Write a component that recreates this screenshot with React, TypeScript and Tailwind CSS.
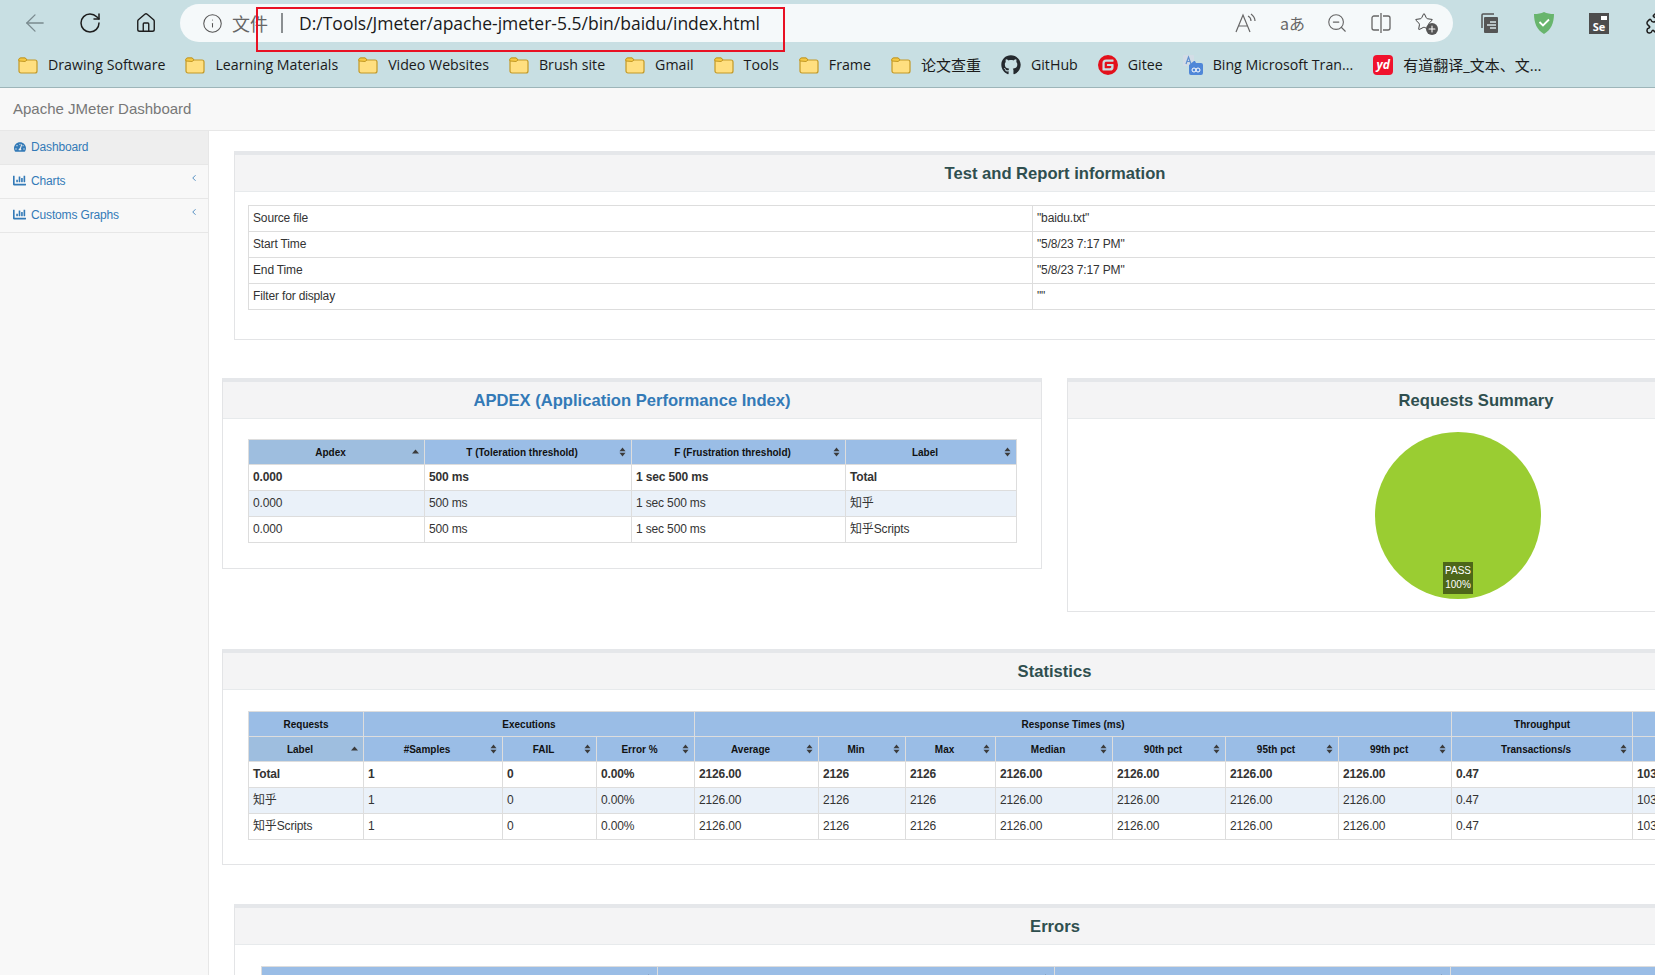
import type { ReactNode } from "react";
import { ArrowLeft, ChevronLeft, House, Info, Plus, Puzzle, RotateCw, Star, ZoomOut } from "lucide-react";
import { FaChartBar, FaGithub, FaTachometerAlt } from "react-icons/fa";
import { SiGitee } from "react-icons/si";

const Folder = () => (
  <svg width="20" height="18" viewBox="0 0 20 18" className="shrink-0">
    <path d="M1 4a2 2 0 0 1 2-2h4l2 2h8a2 2 0 0 1 2 2v9a2 2 0 0 1-2 2H3a2 2 0 0 1-2-2z" fill="#ffdf80" stroke="#c49a26" strokeWidth="1.2" />
    <path d="M1 5a2 2 0 0 1 2-3h4l2 2-2 1.500z" fill="#f5c842" stroke="#c49a26" strokeWidth="1" />
  </svg>
);

const BingIcon = () => (
  <svg width="20" height="20" viewBox="0 0 20 20" className="shrink-0">
    <rect x="0" y="0" width="11" height="11" rx="1" fill="#d3dde6" />
    <path d="M3 9l2.500-7L8 9M4 6.500h3" fill="none" stroke="#5f8fd0" strokeWidth="1.200" />
    <path d="M11 6h1l1 2h5a2 2 0 0 1 2 2v8a2 2 0 0 1-2 2H8a2 2 0 0 1-2-2v-8z" fill="#4f87d8" />
    <circle cx="11" cy="15" r="2" fill="none" stroke="#fff" strokeWidth="1" />
    <circle cx="15" cy="15" r="2" fill="none" stroke="#fff" strokeWidth="1" />
  </svg>
);

function Bookmark({ icon, label, className, labelClass }: { icon: ReactNode; label: string; className: string; labelClass?: string }) {
  return (
    <div className={`flex items-center gap-[10px] ${className}`}>
      {icon}
      <span className={`${labelClass ?? "text-[14.2px]"} text-[#1a1a1a] whitespace-nowrap`}>{label}</span>
    </div>
  );
}

function BrowserChrome() {
  return (
    <div className="relative h-[88px] shrink-0 bg-[#c8dfe3] border-b border-[#9db5b9] font-['Open_Sans','Noto_Sans_CJK_SC',sans-serif]">
      <div className="flex items-center h-[46px]">
        <ArrowLeft size={28} strokeWidth={1.1} className="ml-[21px] shrink-0 text-[#7a8a8f]" />
        <RotateCw size={24} strokeWidth={1.5} className="ml-[29px] shrink-0 text-[#1c1c1c]" />
        <House size={22} strokeWidth={1.5} className="ml-[33px] shrink-0 text-[#1c1c1c]" />
        <div className="ml-[23px] w-[1273px] shrink-0 h-[38px] rounded-full bg-[#f5f9fa] flex items-center pr-[17px]">
          <Info size={21} strokeWidth={1.2} className="ml-[22px] shrink-0 text-[#555]" />
          <span className="ml-[9px] text-[18px] text-[#666] font-['Noto_Sans_CJK_SC',sans-serif]">文件</span>
          <span className="ml-[13px] w-[2px] h-[20px] bg-[#8a8f91]" />
          <span className="ml-[16px] text-[17.500px] text-[#1a1a1a] whitespace-nowrap">D:/Tools/Jmeter/apache-jmeter-5.5/bin/baidu/index.html</span>
          <div className="ml-auto flex items-center gap-[22px] text-[#666]">
            <svg width="24" height="22" viewBox="0 0 24 22" fill="none" stroke="#666" strokeWidth="1.200">
              <path d="M2 20L9 3l7 17M5 14h8" />
              <path d="M14 4c2 1 3 3 3 5M17 2c2 1.500 4 4 4 7" />
            </svg>
            <span className="w-[24px] text-[16px] leading-none text-center whitespace-nowrap font-['Noto_Sans_CJK_SC',sans-serif]">aあ</span>
            <ZoomOut size={22} strokeWidth={1.2} />
            <svg width="22" height="22" viewBox="0 0 22 22" fill="none" stroke="#666" strokeWidth="1.300">
              <path d="M9 4H4a2 2 0 0 0-2 2v10a2 2 0 0 0 2 2h5M13 4h5a2 2 0 0 1 2 2v10a2 2 0 0 1-2 2h-5M11 1v20" />
            </svg>
            <div className="relative w-[22px] h-[22px]">
              <Star size={20} strokeWidth={1.200} className="text-[#444]" />
              <span className="absolute right-[-2px] bottom-[-1px] w-[12px] h-[12px] rounded-full bg-[#555] flex items-center justify-center">
                <Plus size={10} strokeWidth={2.500} className="text-white" />
              </span>
            </div>
          </div>
        </div>
        <svg width="20" height="22" viewBox="0 0 20 22" className="ml-[26px] shrink-0" fill="none">
          <path d="M3 16V3a1 1 0 0 1 1-1h11" stroke="#555" strokeWidth="1.500" />
          <rect x="5" y="5" width="14" height="16" rx="1" fill="#555" />
          <path d="M11 10h6M8 13h9M11 16h6" stroke="#d7e5e8" strokeWidth="1.300" />
        </svg>
        <svg width="20" height="22" viewBox="0 0 20 22" className="ml-[35px] shrink-0">
          <path d="M10 0c3 1.500 6 2 10 2 0 9-3 16-10 20C3 18 0 11 0 2c4 0 7-.5 10-2z" fill="#68b56d" />
          <path d="M5.500 10l3.500 3.500 6-6" fill="none" stroke="#fff" strokeWidth="1.800" />
        </svg>
        <div className="relative ml-[35px] w-[20px] h-[21px] shrink-0 bg-[#4d4d4d] text-white text-[11px] font-bold flex items-end justify-center leading-[14px]">
          Se
          <span className="absolute top-[3px] right-[2px] w-[6px] h-[4px] bg-white" />
        </div>
        <Puzzle size={24} strokeWidth={1.5} className="ml-[36px] shrink-0 text-[#1c1c1c]" />
      </div>
      <div className="flex items-center h-[36px] mt-[1px] pl-[18px]">
        <Bookmark icon={<Folder />} label="Drawing Software" className="mr-[20px]" />
        <Bookmark icon={<Folder />} label="Learning Materials" className="mr-[20px]" />
        <Bookmark icon={<Folder />} label="Video Websites" className="mr-[20px]" />
        <Bookmark icon={<Folder />} label="Brush site" className="mr-[20px]" />
        <Bookmark icon={<Folder />} label="Gmail" className="mr-[20px]" />
        <Bookmark icon={<Folder />} label="Tools" className="mr-[20px]" />
        <Bookmark icon={<Folder />} label="Frame" className="mr-[20px]" />
        <Bookmark icon={<Folder />} label="论文查重" labelClass="text-[15px]" className="mr-[20px]" />
        <Bookmark icon={<FaGithub size={20} className="text-[#24292e] shrink-0" />} label="GitHub" className="mr-[20px]" />
        <Bookmark icon={<SiGitee size={20} className="text-[#e3101b] shrink-0" />} label="Gitee" className="mr-[20px]" />
        <Bookmark icon={<BingIcon />} label="Bing Microsoft Tran..." className="mr-[20px]" />
        <Bookmark
          icon={
            <span className="w-[20px] h-[20px] rounded-[4px] bg-[#f0122d] text-white text-[12px] font-bold italic leading-[19px] text-center shrink-0">yd</span>
          }
          label="有道翻译_文本、文..."
          labelClass="text-[15px]"
          className=""
        />
      </div>
      {/* annotation the screenshot's author drew over the address bar */}
      <div className="absolute left-[256px] top-[7px] w-[529px] h-[45px] border-2 border-[#e81123]" />
    </div>
  );
}

function Sidebar() {
  return (
    <aside className="w-[209px] shrink-0 bg-[#f8f8f8] border-r border-[#e7e7e7] text-[12px] tracking-[-0.15px] text-[#337ab7]">
      <div className="h-[34px] bg-[#eeeeee] border-b border-[#e7e7e7] flex items-center pb-[2px] pl-[14px] gap-[5px]">
        <FaTachometerAlt size={12} />
        Dashboard
      </div>
      {["Charts", "Customs Graphs"].map((item) => (
        <div key={item} className="h-[34px] border-b border-[#e7e7e7] flex items-center pb-[2px] pl-[13px] pr-[9px] gap-[5px]">
          <FaChartBar size={13} />
          {item}
          <ChevronLeft size={10} strokeWidth={2} className="ml-auto mb-[5px]" />
        </div>
      ))}
    </aside>
  );
}

function Panel({ title, className, bodyClass, titleClass, children }: {
  title: string;
  className: string;
  bodyClass: string;
  titleClass?: string;
  children: ReactNode;
}) {
  return (
    <section className={`shrink-0 bg-white border border-[#e3e4e6] border-t-4 border-t-[#e5e7ea] ${className}`}>
      <div className="h-[37px] bg-[#f4f4f5] border-b border-[#e7eaec] flex items-center justify-center pt-[2px]">
        <h2 className={`text-[16.6px] font-bold ${titleClass ?? "text-[#2f4f4f]"}`}>{title}</h2>
      </div>
      <div className={bodyClass}>{children}</div>
    </section>
  );
}

function SortIcon({ up }: { up?: boolean }) {
  if (up) {
    return (
      <svg width="7" height="5" viewBox="0 0 7 5" className="absolute right-[5px] top-[9px]">
        <path d="M3.500 .5L7 4.500H0z" fill="#3b3b3b" />
      </svg>
    );
  }
  return (
    <svg width="7" height="10" viewBox="0 0 7 10" className="absolute right-[5px] top-[7px]">
      <path d="M3.500 .5L6.500 4.300H.5z" fill="#3b3b3b" />
      <path d="M3.500 9.500L6.500 5.700H.5z" fill="#3b3b3b" />
    </svg>
  );
}

const thBase = "relative h-[25px] border border-[#dddddd] px-1 pr-[16px] text-center text-[10px] font-bold text-[#111] whitespace-nowrap";
const thBlue = `${thBase} bg-[#9abde6]`;
const thSorted = `${thBase} bg-[#9ebedf]`;
const groupTh = "h-[25px] border border-[#dddddd] bg-[#9abde6] text-center text-[10px] font-bold text-[#111]";
const td = "h-[26px] border border-[#dddddd] px-1 pb-[2px] text-[12px] tracking-[-0.15px] text-[#333] whitespace-nowrap overflow-hidden";

const infoRows = [
  ["Source file", '"baidu.txt"'],
  ["Start Time", '"5/8/23 7:17 PM"'],
  ["End Time", '"5/8/23 7:17 PM"'],
  ["Filter for display", '""'],
];

const apdexHeads = ["Apdex", "T (Toleration threshold)", "F (Frustration threshold)", "Label"];
const apdexRows = [
  ["0.000", "500 ms", "1 sec 500 ms", "Total"],
  ["0.000", "500 ms", "1 sec 500 ms", "知乎"],
  ["0.000", "500 ms", "1 sec 500 ms", "知乎Scripts"],
];

const statHeads = ["Label", "#Samples", "FAIL", "Error %", "Average", "Min", "Max", "Median", "90th pct", "95th pct", "99th pct", "Transactions/s", "Received", "Sent"];
const statCols = ["w-[115px]", "w-[139px]", "w-[94px]", "w-[98px]", "w-[124px]", "w-[87px]", "w-[90px]", "w-[117px]", "w-[113px]", "w-[113px]", "w-[113px]", "w-[181px]", "w-[115px]", "w-[115px]"];
const statValues = ["1", "0", "0.00%", "2126.00", "2126", "2126", "2126.00", "2126.00", "2126.00", "2126.00", "0.47", "1034.50", "178.20"];
const statRows = ["Total", "知乎", "知乎Scripts"];

const errorHeads = ["Type of error", "Number of errors", "% in errors", "% in all samples"];

function Dashboard() {
  return (
    <main className="flex-1 min-w-0 flex flex-col gap-[37px] pt-[20px]">
      <Panel title="Test and Report information" className="ml-[25px] w-[1642px]" bodyClass="pt-[13px] pl-[13px] pb-[29px]">
        <table className="w-[1614px] table-fixed border-collapse">
          <colgroup>
            <col className="w-[784px]" />
            <col className="w-[830px]" />
          </colgroup>
          <tbody>
            {infoRows.map(([name, value]) => (
              <tr key={name}>
                <td className={td}>{name}</td>
                <td className={td}>{value}</td>
              </tr>
            ))}
          </tbody>
        </table>
      </Panel>

      <div className="flex gap-[25px] items-start ml-[13px] mt-[1px]">
        <Panel title="APDEX (Application Performance Index)" titleClass="text-[#337ab7]" className="w-[820px]" bodyClass="pt-[20px] pl-[25px] pb-[25px]">
          <table className="w-[768px] table-fixed border-collapse">
            <colgroup>
              <col className="w-[176px]" />
              <col className="w-[207px]" />
              <col className="w-[214px]" />
              <col className="w-[171px]" />
            </colgroup>
            <thead>
              <tr>
                {apdexHeads.map((head, i) => (
                  <th key={head} className={i === 0 ? thSorted : thBlue}>
                    {head}
                    <SortIcon up={i === 0} />
                  </th>
                ))}
              </tr>
            </thead>
            <tbody>
              {apdexRows.map((row, r) => (
                <tr key={row[3]} className={r === 1 ? "bg-[#eaf1f9]" : ""}>
                  {row.map((cell, c) => (
                    <td key={c} className={`${td} ${r === 0 ? "font-bold" : ""}`}>{cell}</td>
                  ))}
                </tr>
              ))}
            </tbody>
          </table>
        </Panel>

        <Panel title="Requests Summary" className="w-[818px]" bodyClass="relative h-[192px] pt-[13px] pl-[307px]">
          <svg width="166" height="167" viewBox="0 0 166 167">
            <ellipse cx="83" cy="83.500" rx="83" ry="83.500" fill="#9acd32" />
          </svg>
          <div className="absolute left-[375px] top-[143px] w-[30px] h-[32px] bg-[#4d6619] text-white text-[10px] leading-[14px] text-center pt-[2px]">
            PASS
            <br />
            100%
          </div>
        </Panel>
      </div>

      <Panel title="Statistics" className="ml-[13px] w-[1665px] mb-[2px]" bodyClass="pt-[21px] pl-[25px] pb-[24px]">
        <table className="w-[1614px] table-fixed border-collapse">
          <colgroup>
            {statCols.map((col, i) => (
              <col key={i} className={col} />
            ))}
          </colgroup>
          <thead>
            <tr>
              <th className={groupTh}>Requests</th>
              <th colSpan={3} className={groupTh}>Executions</th>
              <th colSpan={7} className={groupTh}>Response Times (ms)</th>
              <th className={groupTh}>Throughput</th>
              <th colSpan={2} className={groupTh}>Network (KB/sec)</th>
            </tr>
            <tr>
              {statHeads.map((head, i) => (
                <th key={head} className={i === 0 ? thSorted : thBlue}>
                  {head}
                  <SortIcon up={i === 0} />
                </th>
              ))}
            </tr>
          </thead>
          <tbody>
            {statRows.map((label, r) => (
              <tr key={label} className={r === 1 ? "bg-[#eaf1f9]" : ""}>
                <td className={`${td} ${r === 0 ? "font-bold" : ""}`}>{label}</td>
                {statValues.map((value, c) => (
                  <td key={c} className={`${td} ${r === 0 ? "font-bold" : ""}`}>{value}</td>
                ))}
              </tr>
            ))}
          </tbody>
        </table>
      </Panel>

      <Panel title="Errors" className="ml-[25px] w-[1642px]" bodyClass="pt-[21px] pl-[26px]">
        <table className="w-[1586px] table-fixed border-collapse">
          <thead>
            <tr>
              {errorHeads.map((head) => (
                <th key={head} className={thBlue}>
                  {head}
                  <SortIcon />
                </th>
              ))}
            </tr>
          </thead>
        </table>
      </Panel>
    </main>
  );
}

export default function App() {
  return (
    <div className="w-[1655px] h-[975px] overflow-hidden flex flex-col bg-white font-['Liberation_Sans','Noto_Sans_CJK_SC',sans-serif]">
      <BrowserChrome />
      <header className="h-[43px] shrink-0 bg-[#f8f8f8] border-b border-[#e7e7e7] flex items-center pl-[13px] text-[15px] text-[#777]">
        Apache JMeter Dashboard
      </header>
      <div className="flex flex-1 min-h-0">
        <Sidebar />
        <Dashboard />
      </div>
    </div>
  );
}
